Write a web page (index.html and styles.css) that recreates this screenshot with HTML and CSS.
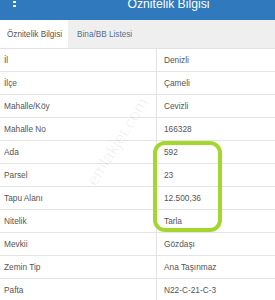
FILE: index.html
```html
<!DOCTYPE html>
<html lang="tr">
<head>
<meta charset="utf-8">
<title>Öznitelik Bilgisi</title>
<link rel="stylesheet" href="styles.css">
</head>
<body>
<div class="page">
  <header class="header">
    <span class="menu"><i></i><i></i></span>
    <h1 class="title">Öznitelik Bilgisi</h1>
  </header>
  <nav class="tabs">
    <span class="tab active">Öznitelik Bilgisi</span>
    <span class="tab">Bina/BB Listesi</span>
  </nav>
  <div class="table">
    <div class="row"><span class="key">İl</span><span class="val">Denizli</span></div>
    <div class="row"><span class="key">İlçe</span><span class="val">Çameli</span></div>
    <div class="row"><span class="key">Mahalle/Köy</span><span class="val">Cevizli</span></div>
    <div class="row"><span class="key">Mahalle No</span><span class="val">166328</span></div>
    <div class="row"><span class="key">Ada</span><span class="val">592</span></div>
    <div class="row"><span class="key">Parsel</span><span class="val">23</span></div>
    <div class="row"><span class="key">Tapu Alanı</span><span class="val">12.500,36</span></div>
    <div class="row"><span class="key">Nitelik</span><span class="val">Tarla</span></div>
    <div class="row"><span class="key">Mevkii</span><span class="val">Gözdaşı</span></div>
    <div class="row"><span class="key">Zemin Tip</span><span class="val">Ana Taşınmaz</span></div>
    <div class="row"><span class="key">Pafta</span><span class="val">N22-C-21-C-3</span></div>
  </div>
  <div class="highlight"></div>
  <div class="watermark">emlakjet.com</div>
</div>
</body>
</html>
```
FILE: styles.css
```css
html, body {
  margin: 0;
  padding: 0;
  background: #ffffff;
}
.page {
  position: relative;
  width: 275px;
  height: 300px;
  overflow: hidden;
  font-family: "Liberation Sans", Arial, sans-serif;
}
.header {
  height: 20px;
  background: #2f79bc;
  display: flex;
  align-items: flex-start;
  position: relative;
}
.menu {
  display: flex;
  flex-direction: column;
  gap: 1.5px;
  margin: 0.5px 0 0 13px;
}
.menu i {
  display: block;
  width: 2.5px;
  height: 2.5px;
  background: #ffffff;
  border-radius: 0.5px;
}
.title {
  margin: -2px 0 0 112px;
  font-size: 12.2px;
  font-weight: normal;
  line-height: 12px;
  color: #ffffff;
  white-space: nowrap;
}
.tabs {
  height: 28px;
  background: #efefef;
  border-bottom: 1px solid #e2e2e2;
  display: flex;
  align-items: stretch;
}
.tab {
  display: flex;
  align-items: center;
  padding: 0 9px 0 9px;
  font-size: 8.2px;
  color: #4f6f8f;
  white-space: nowrap;
}
.tab.active {
  background: #ffffff;
  color: #555555;
  padding: 0 6px 0 7px;
}
.table {
  display: flex;
  flex-direction: column;
}
.row {
  display: grid;
  grid-template-columns: 157px 1fr;
  height: 22px;
  border-bottom: 1px solid #e4e4e4;
  font-size: 8.3px;
  color: #555555;
  white-space: nowrap;
}
.key {
  display: flex;
  align-items: center;
  padding-left: 4px;
  border-right: 1px solid #e4e4e4;
}
.val {
  display: flex;
  align-items: center;
  padding-left: 7px;
}
.highlight {
  position: absolute;
  left: 153px;
  top: 141px;
  width: 61px;
  height: 83px;
  border: 4px solid #a3d72d;
  border-radius: 12px;
}
.watermark {
  position: absolute;
  left: 58px;
  top: 132px;
  width: 120px;
  text-align: center;
  font-size: 17px;
  color: rgba(0, 0, 0, 0.06);
  transform: rotate(-58deg);
  white-space: nowrap;
}
```
